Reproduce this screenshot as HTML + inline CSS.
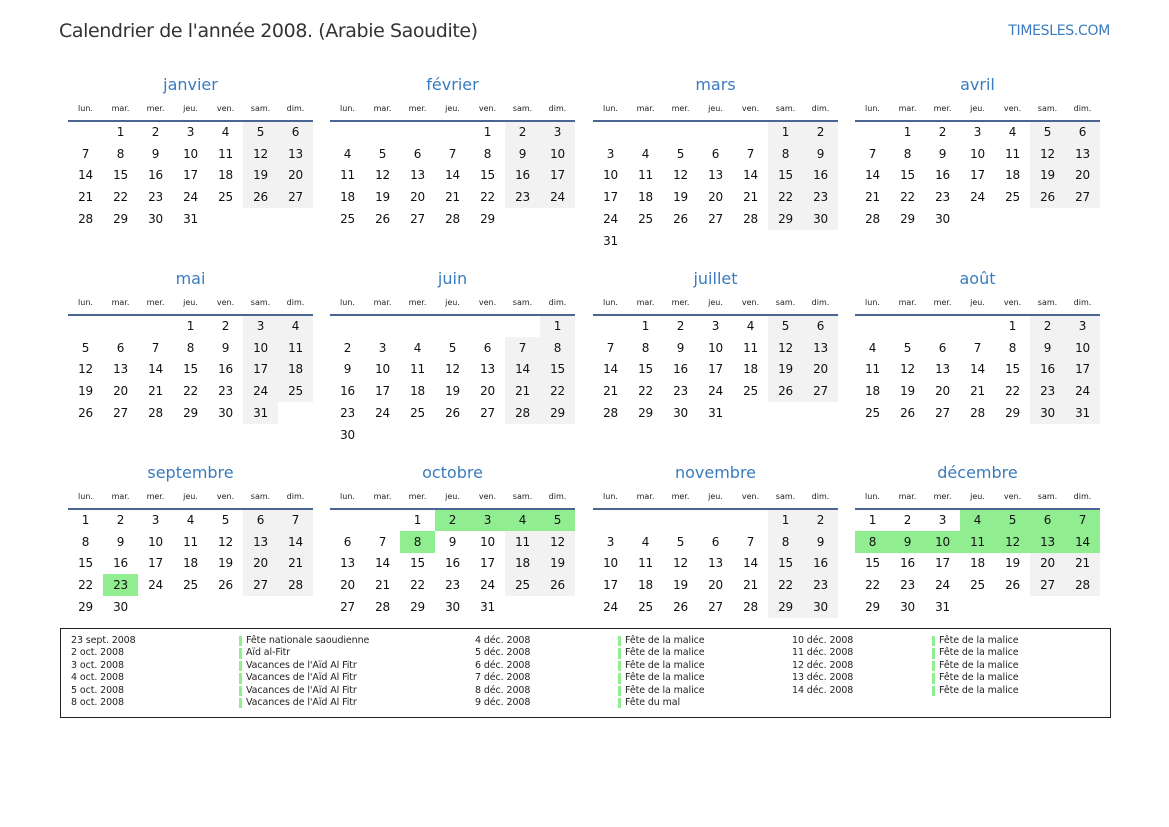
<!DOCTYPE html>
<html><head><meta charset="utf-8"><style>
*{margin:0;padding:0;box-sizing:border-box}
body{width:1169px;height:827px;background:#fff;position:relative;font-family:"DejaVu Sans","Liberation Sans",sans-serif;color:#111;overflow:hidden}
.h1{position:absolute;left:59px;top:20px;font-size:19px;color:#333;letter-spacing:-0.4px}
.logo{position:absolute;right:59px;top:23px;font-size:14px;color:#3a7bbf;letter-spacing:-0.3px}
.m{position:absolute;width:245px}
.t{height:26px;line-height:26px;text-align:center;font-size:16px;color:#3a7bbf}
table{border-collapse:collapse;width:245px;table-layout:fixed}
th{height:20px;line-height:22px;font-size:8px;font-weight:normal;color:#222;border-bottom:2px solid #4a6592;padding:0}
td{height:21.75px;width:35px;text-align:center;font-size:12px;padding:0;letter-spacing:-0.2px}
td.s{background:#f2f2f2}
td.g{background:#90ee90}
.leg{position:absolute;left:60px;top:628px;width:1051px;height:90px;border:1.5px solid #222}
.c{position:absolute;top:6px;font-size:9.5px;line-height:12.4px;color:#222;white-space:nowrap;letter-spacing:-0.1px}
.b div{position:relative;padding-left:7px}
.b div:before{content:"";position:absolute;left:0;top:1px;bottom:1px;width:3px;background:#90ee90}
</style></head><body>
<div class="h1">Calendrier de l'année 2008. (Arabie Saoudite)</div>
<div class="logo">TIMESLES.COM</div>

<div class="m" style="left:68px;top:72px"><div class="t">janvier</div><table>
<tr><th>lun.</th><th>mar.</th><th>mer.</th><th>jeu.</th><th>ven.</th><th>sam.</th><th>dim.</th></tr>
<tr><td></td><td>1</td><td>2</td><td>3</td><td>4</td><td class=s>5</td><td class=s>6</td></tr>
<tr><td>7</td><td>8</td><td>9</td><td>10</td><td>11</td><td class=s>12</td><td class=s>13</td></tr>
<tr><td>14</td><td>15</td><td>16</td><td>17</td><td>18</td><td class=s>19</td><td class=s>20</td></tr>
<tr><td>21</td><td>22</td><td>23</td><td>24</td><td>25</td><td class=s>26</td><td class=s>27</td></tr>
<tr><td>28</td><td>29</td><td>30</td><td>31</td><td></td><td></td><td></td></tr>
</table></div>

<div class="m" style="left:330px;top:72px"><div class="t">février</div><table>
<tr><th>lun.</th><th>mar.</th><th>mer.</th><th>jeu.</th><th>ven.</th><th>sam.</th><th>dim.</th></tr>
<tr><td></td><td></td><td></td><td></td><td>1</td><td class=s>2</td><td class=s>3</td></tr>
<tr><td>4</td><td>5</td><td>6</td><td>7</td><td>8</td><td class=s>9</td><td class=s>10</td></tr>
<tr><td>11</td><td>12</td><td>13</td><td>14</td><td>15</td><td class=s>16</td><td class=s>17</td></tr>
<tr><td>18</td><td>19</td><td>20</td><td>21</td><td>22</td><td class=s>23</td><td class=s>24</td></tr>
<tr><td>25</td><td>26</td><td>27</td><td>28</td><td>29</td><td></td><td></td></tr>
</table></div>

<div class="m" style="left:593px;top:72px"><div class="t">mars</div><table>
<tr><th>lun.</th><th>mar.</th><th>mer.</th><th>jeu.</th><th>ven.</th><th>sam.</th><th>dim.</th></tr>
<tr><td></td><td></td><td></td><td></td><td></td><td class=s>1</td><td class=s>2</td></tr>
<tr><td>3</td><td>4</td><td>5</td><td>6</td><td>7</td><td class=s>8</td><td class=s>9</td></tr>
<tr><td>10</td><td>11</td><td>12</td><td>13</td><td>14</td><td class=s>15</td><td class=s>16</td></tr>
<tr><td>17</td><td>18</td><td>19</td><td>20</td><td>21</td><td class=s>22</td><td class=s>23</td></tr>
<tr><td>24</td><td>25</td><td>26</td><td>27</td><td>28</td><td class=s>29</td><td class=s>30</td></tr>
<tr><td>31</td><td></td><td></td><td></td><td></td><td></td><td></td></tr>
</table></div>

<div class="m" style="left:855px;top:72px"><div class="t">avril</div><table>
<tr><th>lun.</th><th>mar.</th><th>mer.</th><th>jeu.</th><th>ven.</th><th>sam.</th><th>dim.</th></tr>
<tr><td></td><td>1</td><td>2</td><td>3</td><td>4</td><td class=s>5</td><td class=s>6</td></tr>
<tr><td>7</td><td>8</td><td>9</td><td>10</td><td>11</td><td class=s>12</td><td class=s>13</td></tr>
<tr><td>14</td><td>15</td><td>16</td><td>17</td><td>18</td><td class=s>19</td><td class=s>20</td></tr>
<tr><td>21</td><td>22</td><td>23</td><td>24</td><td>25</td><td class=s>26</td><td class=s>27</td></tr>
<tr><td>28</td><td>29</td><td>30</td><td></td><td></td><td></td><td></td></tr>
</table></div>

<div class="m" style="left:68px;top:266px"><div class="t">mai</div><table>
<tr><th>lun.</th><th>mar.</th><th>mer.</th><th>jeu.</th><th>ven.</th><th>sam.</th><th>dim.</th></tr>
<tr><td></td><td></td><td></td><td>1</td><td>2</td><td class=s>3</td><td class=s>4</td></tr>
<tr><td>5</td><td>6</td><td>7</td><td>8</td><td>9</td><td class=s>10</td><td class=s>11</td></tr>
<tr><td>12</td><td>13</td><td>14</td><td>15</td><td>16</td><td class=s>17</td><td class=s>18</td></tr>
<tr><td>19</td><td>20</td><td>21</td><td>22</td><td>23</td><td class=s>24</td><td class=s>25</td></tr>
<tr><td>26</td><td>27</td><td>28</td><td>29</td><td>30</td><td class=s>31</td><td></td></tr>
</table></div>

<div class="m" style="left:330px;top:266px"><div class="t">juin</div><table>
<tr><th>lun.</th><th>mar.</th><th>mer.</th><th>jeu.</th><th>ven.</th><th>sam.</th><th>dim.</th></tr>
<tr><td></td><td></td><td></td><td></td><td></td><td></td><td class=s>1</td></tr>
<tr><td>2</td><td>3</td><td>4</td><td>5</td><td>6</td><td class=s>7</td><td class=s>8</td></tr>
<tr><td>9</td><td>10</td><td>11</td><td>12</td><td>13</td><td class=s>14</td><td class=s>15</td></tr>
<tr><td>16</td><td>17</td><td>18</td><td>19</td><td>20</td><td class=s>21</td><td class=s>22</td></tr>
<tr><td>23</td><td>24</td><td>25</td><td>26</td><td>27</td><td class=s>28</td><td class=s>29</td></tr>
<tr><td>30</td><td></td><td></td><td></td><td></td><td></td><td></td></tr>
</table></div>

<div class="m" style="left:593px;top:266px"><div class="t">juillet</div><table>
<tr><th>lun.</th><th>mar.</th><th>mer.</th><th>jeu.</th><th>ven.</th><th>sam.</th><th>dim.</th></tr>
<tr><td></td><td>1</td><td>2</td><td>3</td><td>4</td><td class=s>5</td><td class=s>6</td></tr>
<tr><td>7</td><td>8</td><td>9</td><td>10</td><td>11</td><td class=s>12</td><td class=s>13</td></tr>
<tr><td>14</td><td>15</td><td>16</td><td>17</td><td>18</td><td class=s>19</td><td class=s>20</td></tr>
<tr><td>21</td><td>22</td><td>23</td><td>24</td><td>25</td><td class=s>26</td><td class=s>27</td></tr>
<tr><td>28</td><td>29</td><td>30</td><td>31</td><td></td><td></td><td></td></tr>
</table></div>

<div class="m" style="left:855px;top:266px"><div class="t">août</div><table>
<tr><th>lun.</th><th>mar.</th><th>mer.</th><th>jeu.</th><th>ven.</th><th>sam.</th><th>dim.</th></tr>
<tr><td></td><td></td><td></td><td></td><td>1</td><td class=s>2</td><td class=s>3</td></tr>
<tr><td>4</td><td>5</td><td>6</td><td>7</td><td>8</td><td class=s>9</td><td class=s>10</td></tr>
<tr><td>11</td><td>12</td><td>13</td><td>14</td><td>15</td><td class=s>16</td><td class=s>17</td></tr>
<tr><td>18</td><td>19</td><td>20</td><td>21</td><td>22</td><td class=s>23</td><td class=s>24</td></tr>
<tr><td>25</td><td>26</td><td>27</td><td>28</td><td>29</td><td class=s>30</td><td class=s>31</td></tr>
</table></div>

<div class="m" style="left:68px;top:460px"><div class="t">septembre</div><table>
<tr><th>lun.</th><th>mar.</th><th>mer.</th><th>jeu.</th><th>ven.</th><th>sam.</th><th>dim.</th></tr>
<tr><td>1</td><td>2</td><td>3</td><td>4</td><td>5</td><td class=s>6</td><td class=s>7</td></tr>
<tr><td>8</td><td>9</td><td>10</td><td>11</td><td>12</td><td class=s>13</td><td class=s>14</td></tr>
<tr><td>15</td><td>16</td><td>17</td><td>18</td><td>19</td><td class=s>20</td><td class=s>21</td></tr>
<tr><td>22</td><td class=g>23</td><td>24</td><td>25</td><td>26</td><td class=s>27</td><td class=s>28</td></tr>
<tr><td>29</td><td>30</td><td></td><td></td><td></td><td></td><td></td></tr>
</table></div>

<div class="m" style="left:330px;top:460px"><div class="t">octobre</div><table>
<tr><th>lun.</th><th>mar.</th><th>mer.</th><th>jeu.</th><th>ven.</th><th>sam.</th><th>dim.</th></tr>
<tr><td></td><td></td><td>1</td><td class=g>2</td><td class=g>3</td><td class=g>4</td><td class=g>5</td></tr>
<tr><td>6</td><td>7</td><td class=g>8</td><td>9</td><td>10</td><td class=s>11</td><td class=s>12</td></tr>
<tr><td>13</td><td>14</td><td>15</td><td>16</td><td>17</td><td class=s>18</td><td class=s>19</td></tr>
<tr><td>20</td><td>21</td><td>22</td><td>23</td><td>24</td><td class=s>25</td><td class=s>26</td></tr>
<tr><td>27</td><td>28</td><td>29</td><td>30</td><td>31</td><td></td><td></td></tr>
</table></div>

<div class="m" style="left:593px;top:460px"><div class="t">novembre</div><table>
<tr><th>lun.</th><th>mar.</th><th>mer.</th><th>jeu.</th><th>ven.</th><th>sam.</th><th>dim.</th></tr>
<tr><td></td><td></td><td></td><td></td><td></td><td class=s>1</td><td class=s>2</td></tr>
<tr><td>3</td><td>4</td><td>5</td><td>6</td><td>7</td><td class=s>8</td><td class=s>9</td></tr>
<tr><td>10</td><td>11</td><td>12</td><td>13</td><td>14</td><td class=s>15</td><td class=s>16</td></tr>
<tr><td>17</td><td>18</td><td>19</td><td>20</td><td>21</td><td class=s>22</td><td class=s>23</td></tr>
<tr><td>24</td><td>25</td><td>26</td><td>27</td><td>28</td><td class=s>29</td><td class=s>30</td></tr>
</table></div>

<div class="m" style="left:855px;top:460px"><div class="t">décembre</div><table>
<tr><th>lun.</th><th>mar.</th><th>mer.</th><th>jeu.</th><th>ven.</th><th>sam.</th><th>dim.</th></tr>
<tr><td>1</td><td>2</td><td>3</td><td class=g>4</td><td class=g>5</td><td class=g>6</td><td class=g>7</td></tr>
<tr><td class=g>8</td><td class=g>9</td><td class=g>10</td><td class=g>11</td><td class=g>12</td><td class=g>13</td><td class=g>14</td></tr>
<tr><td>15</td><td>16</td><td>17</td><td>18</td><td>19</td><td class=s>20</td><td class=s>21</td></tr>
<tr><td>22</td><td>23</td><td>24</td><td>25</td><td>26</td><td class=s>27</td><td class=s>28</td></tr>
<tr><td>29</td><td>30</td><td>31</td><td></td><td></td><td></td><td></td></tr>
</table></div>

<div class="leg">
<div class="c" style="left:10px"><div>23 sept. 2008</div><div>2 oct. 2008</div><div>3 oct. 2008</div><div>4 oct. 2008</div><div>5 oct. 2008</div><div>8 oct. 2008</div></div>
<div class="c b" style="left:178px"><div>Fête nationale saoudienne</div><div>Aïd al-Fitr</div><div>Vacances de l'Aïd Al Fitr</div><div>Vacances de l'Aïd Al Fitr</div><div>Vacances de l'Aïd Al Fitr</div><div>Vacances de l'Aïd Al Fitr</div></div>
<div class="c" style="left:414px"><div>4 déc. 2008</div><div>5 déc. 2008</div><div>6 déc. 2008</div><div>7 déc. 2008</div><div>8 déc. 2008</div><div>9 déc. 2008</div></div>
<div class="c b" style="left:557px"><div>Fête de la malice</div><div>Fête de la malice</div><div>Fête de la malice</div><div>Fête de la malice</div><div>Fête de la malice</div><div>Fête du mal</div></div>
<div class="c" style="left:731px"><div>10 déc. 2008</div><div>11 déc. 2008</div><div>12 déc. 2008</div><div>13 déc. 2008</div><div>14 déc. 2008</div></div>
<div class="c b" style="left:871px"><div>Fête de la malice</div><div>Fête de la malice</div><div>Fête de la malice</div><div>Fête de la malice</div><div>Fête de la malice</div></div>
</div>
</body></html>
